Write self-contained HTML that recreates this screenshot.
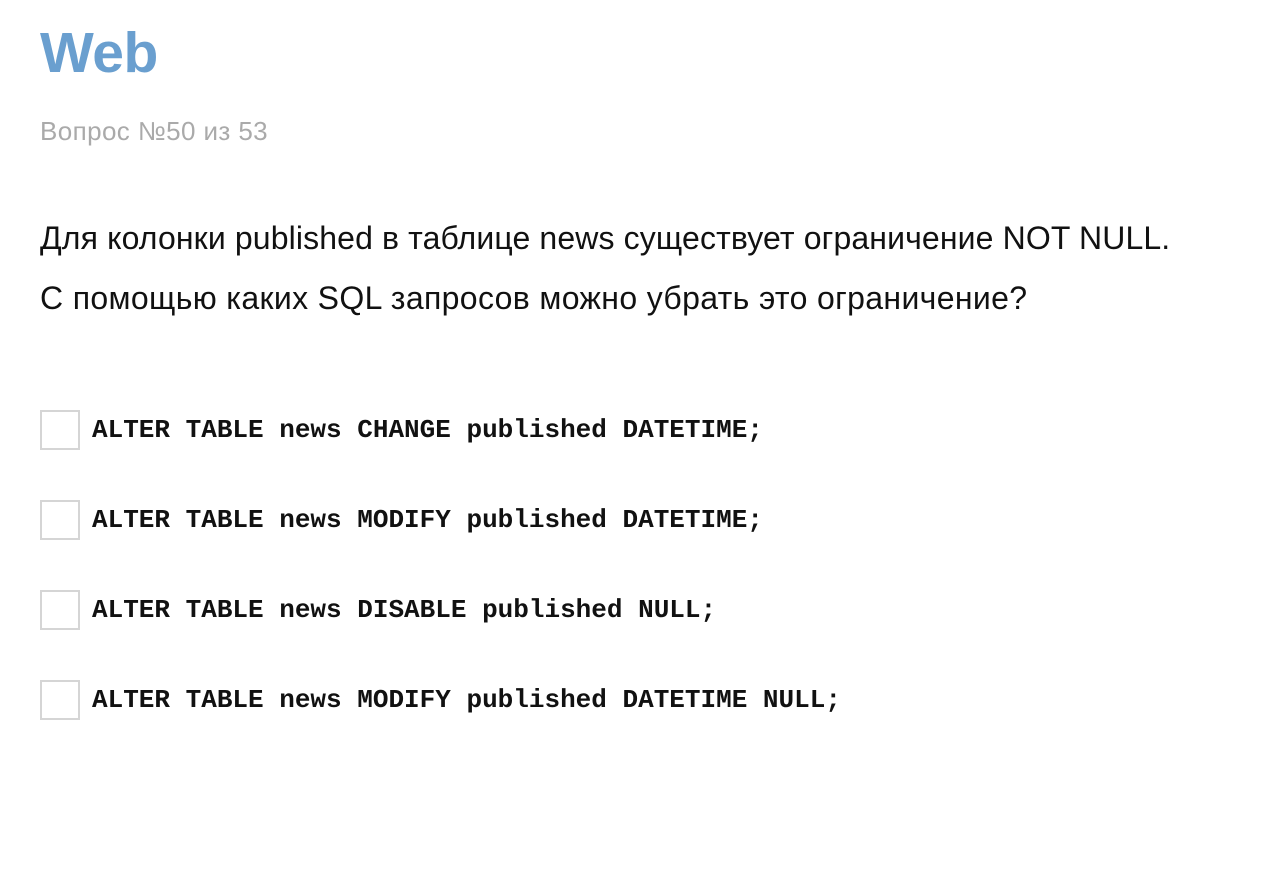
<!DOCTYPE html>
<html><head><meta charset="utf-8"><style>
body{margin:0;background:#fff;font-family:"Liberation Sans",sans-serif;width:1272px;height:874px;overflow:hidden;position:relative}
.a{position:absolute;white-space:nowrap}
h1{position:absolute;left:40px;top:18px;margin:0;font-size:57px;font-weight:bold;color:#6a9fcf;letter-spacing:-0.5px;line-height:70px}
.sub{left:40px;top:115px;font-size:26px;color:#aaa;line-height:32px;letter-spacing:0.4px}
.q{left:40px;font-size:32px;color:#111;line-height:40px}
.cb{position:absolute;left:40px;width:36px;height:36px;border:2px solid #d5d5d5;background:#fff}
.o{left:92px;font-family:"Liberation Mono",monospace;font-size:26px;font-weight:bold;color:#111;line-height:40px}
</style></head><body>
<h1>Web</h1>
<div class="a sub">Вопрос №50 из 53</div>
<div class="a q" style="top:218px;letter-spacing:0.13px">Для колонки published в таблице news существует ограничение NOT NULL.</div>
<div class="a q" style="top:278px;letter-spacing:0.35px">С помощью каких SQL запросов можно убрать это ограничение?</div>
<div class="cb" style="top:410px"></div><div class="a o" style="top:410px">ALTER TABLE news CHANGE published DATETIME;</div>
<div class="cb" style="top:500px"></div><div class="a o" style="top:500px">ALTER TABLE news MODIFY published DATETIME;</div>
<div class="cb" style="top:590px"></div><div class="a o" style="top:590px">ALTER TABLE news DISABLE published NULL;</div>
<div class="cb" style="top:680px"></div><div class="a o" style="top:680px">ALTER TABLE news MODIFY published DATETIME NULL;</div>
</body></html>
